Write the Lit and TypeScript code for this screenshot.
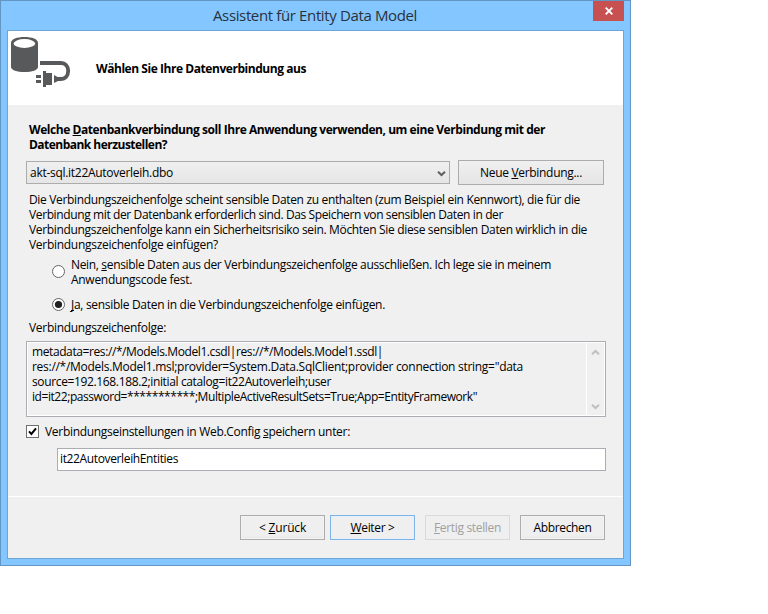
import { LitElement, html, css } from "lit";
import { customElement, property, query } from "lit/decorators.js";

/** One line of text set to a fixed measure; "&" marks the access key. */
@customElement("text-line")
class TextLine extends LitElement {
  @property() text = "";
  @property({ type: Number }) measure = 0;
  @query(".run") run!: HTMLSpanElement;

  static styles = css`
    :host { display: block; height: 15px; line-height: 15px; }
    .run { display: inline-block; white-space: pre; vertical-align: top; }
    .key { text-decoration: underline; text-decoration-thickness: 1px; text-underline-offset: 1px; text-decoration-skip-ink: none; }
  `;

  updated() {
    const run = this.run;
    run.style.letterSpacing = "0px";
    const natural = run.getBoundingClientRect().width;
    const count = this.text.replace("&", "").length;
    run.style.letterSpacing = `${(this.measure - 1 - natural) / count}px`;
  }

  render() {
    const i = this.text.indexOf("&");
    return i < 0
      ? html`<span class="run">${this.text}</span>`
      : html`<span class="run">${this.text.slice(0, i)}<span class="key">${this.text[i + 1]}</span>${this.text.slice(i + 2)}</span>`;
  }
}

type Line = [string, number];

const QUESTION: Line[] = [
  ["Welche &Datenbankverbindung soll Ihre Anwendung verwenden, um eine Verbindung mit der", 517],
  ["Datenbank herzustellen?", 139],
];
const WARNING: Line[] = [
  ["Die Verbindungszeichenfolge scheint sensible Daten zu enthalten (zum Beispiel ein Kennwort), die für die", 552],
  ["Verbindung mit der Datenbank erforderlich sind. Das Speichern von sensiblen Daten in der", 475],
  ["Verbindungszeichenfolge kann ein Sicherheitsrisiko sein. Möchten Sie diese sensiblen Daten wirklich in die", 559],
  ["Verbindungszeichenfolge einfügen?", 190],
];
const EXCLUDE: Line[] = [
  ["Nein, &sensible Daten aus der Verbindungszeichenfolge ausschließen. Ich lege sie in meinem", 481],
  ["Anwendungscode fest.", 122],
];
const INCLUDE: Line[] = [["&Ja, sensible Daten in die Verbindungszeichenfolge einfügen.", 315]];
const CONNECTION: Line[] = [
  ["metadata=res://*/Models.Model1.csdl|res://*/Models.Model1.ssdl|", 352],
  ["res://*/Models.Model1.msl;provider=System.Data.SqlClient;provider connection string=\"data", 492],
  ["source=192.168.188.2;initial catalog=it22Autoverleih;user", 300],
  ["id=it22;password=***********;MultipleActiveResultSets=True;App=EntityFramework\"", 446],
];

const lines = (items: Line[]) =>
  items.map(([text, width]) => html`<text-line .text=${text} .measure=${width}></text-line>`);

@customElement("app-root")
class AppRoot extends LitElement {
  static styles = css`
    :host { display: block; height: 614px; background: #fff; overflow: hidden;
      font: 12px/15px "Open Sans", "Noto Sans", sans-serif; color: #000; }
    * { box-sizing: border-box; }
    svg { display: block; flex: none; }
    .window { width: 631px; height: 566px; display: flex; flex-direction: column;
      background: #84c6ff; border: 1px solid #6496c3; padding: 0 6px 6px; }
    .titlebar { height: 29px; flex: none; display: grid; grid-template-columns: 1fr 31px; }
    .title { padding: 7px 0 0 206px; font-size: 15px; color: #28323c; }
    .close { width: 31px; height: 20px; background: #c75050; display: grid; place-items: center; }
    .client { flex: 1; border: 1px solid #6ea5d7; background: #f0f0f0; display: flex; flex-direction: column; }
    .header { height: 74px; flex: none; background: #fff; display: flex; font-weight: 700; }
    .header text-line { margin: 30px 0 0 24px; }
    .body { height: 391px; flex: none; padding: 17px 17px 0 18px; }
    .question { padding-left: 3px; font-weight: 700; }
    .picker { display: flex; align-items: center; gap: 8px; margin-top: 8px; }
    .combo { width: 424px; height: 23px; border: 1px solid #acacac; display: flex; justify-content: space-between;
      align-items: flex-start; padding: 3px 3px 0 3px; background: linear-gradient(#f0f0f0, #e5e5e5); }
    .combo svg { margin-top: 5px; }
    .button { height: 25px; width: 85px; border: 1px solid #acacac; display: flex; justify-content: center;
      padding-top: 4px; background: linear-gradient(#f0f0f0, #e5e5e5); }
    .button.wide { width: 146px; }
    .footer .button { background: #efefef; box-shadow: inset 0 0 0 1px #f3f3f3, inset 0 -2px 2px #e9e9e9; }
    .footer .button.primary { border-color: #7eb4ea; box-shadow: inset 0 0 0 1px #e4f0fb; }
    .footer .button.disabled { border-color: #d9d9d9; color: #a0a0a0; box-shadow: none; }
    .warning { padding: 7px 0 0 3px; }
    .option { display: flex; align-items: center; gap: 6px; padding-left: 26px; margin-top: 5px; }
    .option.first svg { margin-bottom: 2px; }
    .option.second { margin-top: 10px; }
    .caption { padding: 8px 0 0 3px; }
    .connection { height: 76px; margin-top: 6px; border: 1px solid #abadb3; display: flex; justify-content: space-between;
      box-shadow: inset 0 0 0 1px #fff; }
    .connection .content { padding: 2px 0 0 5px; }
    .scroll { width: 19px; border-left: 1px solid #fff; display: flex; flex-direction: column; justify-content: space-between; padding: 7px 0 6px 4px; }
    .save { display: flex; align-items: center; gap: 6px; margin-top: 7px; }
    .entities { height: 23px; margin: 9px 0 0 31px; border: 1px solid #abadb3; background: #fff; padding: 2px 0 0 2px; }
    .footer { flex: 1; border-top: 1px solid #fff; display: flex; justify-content: flex-end; padding: 18px 18px 0 0; }
    .b1 { margin-right: 5px; }
    .b2, .b3 { margin-right: 10px; }
  `;

  radio(on: boolean) {
    return html`<svg width="13" height="13" viewBox="0 0 13 13">
      <circle cx="6.5" cy="6.5" r="6" fill="#fff" stroke="#666"/>
      ${on ? html`<svg width="13" height="13"><circle cx="6.5" cy="6.5" r="3.6" fill="#212121"/></svg>` : ""}
    </svg>`;
  }

  chevron(up: boolean, color: string) {
    return html`<svg width="9" height="7" viewBox="0 0 9 7" fill="none" stroke=${color} stroke-width="2">
      <path d=${up ? "M1 5.2L4.5 1.9L8 5.2" : "M1 1.8L4.5 5.1L8 1.8"}/></svg>`;
  }

  render() {
    return html`
      <div class="window">
        <div class="titlebar">
          <div class="title"><text-line .text=${"Assistent für Entity Data Model"} .measure=${205}></text-line></div>
          <div class="close">
            <svg width="8" height="8" viewBox="0 0 8 8"><path d="M.7.7L7.3 7.3M7.3.7L.7 7.3" stroke="#fff" stroke-width="1.9"/></svg>
          </div>
        </div>
        <div class="client">
          <div class="header">
            <svg width="64" height="60" viewBox="8 31 64 60">
              <path fill="#58595b" d="M11 43C11 39 17 37 24.500 37S38 39 38 43V67C38 70 32 72 24.500 72S11 70 11 67Z"/>
              <ellipse cx="24.400" cy="43.500" rx="10.800" ry="4.400" fill="#fff"/>
              <path d="M40 63H60.500C65.500 63 68.200 66.500 68.200 70.800C68.200 75.500 65.500 79 60.500 79H57" fill="none" stroke="#58595b" stroke-width="3.800"/>
              <path fill="#58595b" d="M36 75h5v3h-5zM36 80h5v3h-5zM43 71h3v2h6v12h-6v2h-3zM54 75l4 2.200v3.700L54 83z"/>
            </svg>
            <text-line .text=${"Wählen Sie Ihre Datenverbindung aus"} .measure=${211}></text-line>
          </div>
          <div class="body">
            <div class="question">${lines(QUESTION)}</div>
            <div class="picker">
              <div class="combo">
                <text-line .text=${"akt-sql.it22Autoverleih.dbo"} .measure=${144}></text-line>
                ${this.chevron(false, "#606060")}
              </div>
              <div class="button wide"><text-line .text=${"Neue &Verbindung..."} .measure=${103}></text-line></div>
            </div>
            <div class="warning">${lines(WARNING)}</div>
            <div class="option first">${this.radio(false)}<div>${lines(EXCLUDE)}</div></div>
            <div class="option second">${this.radio(true)}<div>${lines(INCLUDE)}</div></div>
            <div class="caption"><text-line .text=${"Verbindungszeichenfolge:"} .measure=${138}></text-line></div>
            <div class="connection">
              <div class="content">${lines(CONNECTION)}</div>
              <div class="scroll">${this.chevron(true, "#bfbfbf")}${this.chevron(false, "#bfbfbf")}</div>
            </div>
            <div class="save">
              <svg width="13" height="13" viewBox="0 0 13 13">
                <rect x=".5" y=".5" width="12" height="12" fill="#fff" stroke="#707070"/>
                <path d="M3 6.400L5.400 9L10 3.400" fill="none" stroke="#000" stroke-width="2"/>
              </svg>
              <text-line .text=${"Verbindungseinstellungen in Web.Config &speichern unter:"} .measure=${306}></text-line>
            </div>
            <div class="entities"><text-line .text=${"it22AutoverleihEntities"} .measure=${119}></text-line></div>
          </div>
          <div class="footer">
            <div class="button b1"><text-line .text=${"< &Zurück"} .measure=${48}></text-line></div>
            <div class="button b2 primary"><text-line .text=${"&Weiter >"} .measure=${45}></text-line></div>
            <div class="button b3 disabled"><text-line .text=${"&Fertig stellen"} .measure=${68}></text-line></div>
            <div class="button"><text-line .text=${"Abbrechen"} .measure=${59}></text-line></div>
          </div>
        </div>
      </div>`;
  }
}
